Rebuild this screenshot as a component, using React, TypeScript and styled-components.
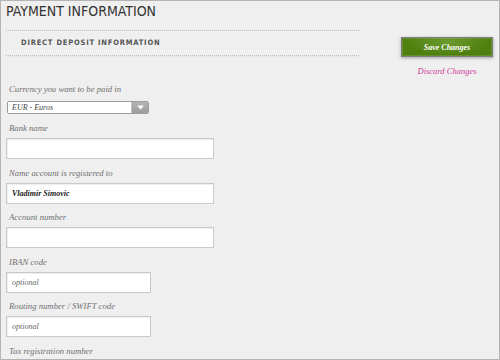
import styled, { createGlobalStyle } from 'styled-components';

const GlobalStyle = createGlobalStyle`
  html,
  body {
    margin: 0;
    padding: 0;
    background: #efefef;
  }

  * {
    box-sizing: border-box;
  }
`;

type FieldDef = {
  id: string;
  label: string;
  value?: string;
  placeholder?: string;
  short?: boolean;
};

const fields: FieldDef[] = [
  { id: 'bank-name', label: 'Bank name' },
  { id: 'account-name', label: 'Name account is registered to', value: 'Vladimir Simovic' },
  { id: 'account-number', label: 'Account number' },
  { id: 'iban', label: 'IBAN code', placeholder: 'optional', short: true },
  { id: 'swift', label: 'Routing number / SWIFT code', placeholder: 'optional', short: true },
  { id: 'tax', label: 'Tax registration number' },
];

function App() {
  return (
    <>
      <GlobalStyle />
      <Frame>
        <Title>PAYMENT INFORMATION</Title>
        <Body>
          <Main>
            <SectionHeader>DIRECT DEPOSIT INFORMATION</SectionHeader>

            <Field $select>
              <Label htmlFor='currency'>Currency you want to be paid in</Label>
              <SelectBox id='currency'>
                <span>EUR - Euros</span>
                <SelectArrow>
                  <svg width='7' height='5' viewBox='0 0 7 5'>
                    <path d='M0 0.5 L7 0.5 L3.5 4.5 Z' fill='#fff' />
                  </svg>
                </SelectArrow>
              </SelectBox>
            </Field>

            {fields.map((f) => (
              <Field key={f.id}>
                <Label htmlFor={f.id}>{f.label}</Label>
                <TextInput
                  id={f.id}
                  type='text'
                  $short={f.short}
                  defaultValue={f.value}
                  placeholder={f.placeholder}
                />
              </Field>
            ))}
          </Main>

          <Aside>
            <SaveButton>Save Changes</SaveButton>
            <DiscardLink href='#'>Discard Changes</DiscardLink>
          </Aside>
        </Body>
      </Frame>
    </>
  );
}

const Frame = styled.div`
  width: 500px;
  height: 360px;
  border: 1px solid #b4b4b4;
  background: #efefef;
  overflow: hidden;
`;

const Title = styled.h1`
  margin: 0;
  padding: 1px 5px 0;
  height: 19px;
  font-family: 'Liberation Sans Narrow', 'DejaVu Sans Condensed', 'Liberation Sans', sans-serif;
  font-weight: normal;
  font-size: 14px;
  line-height: 18px;
  color: #333;
`;

const Body = styled.div`
  display: flex;
  align-items: flex-start;
`;

const Main = styled.div`
  width: 353px;
  margin-left: 5px;
`;

const SectionHeader = styled.h2`
  margin: 10px 0 0;
  height: 26px;
  padding-left: 15px;
  border-top: 1px dotted #bcbcbc;
  border-bottom: 1px dotted #bcbcbc;
  box-shadow: 0 2px 2px -1px rgba(0, 0, 0, 0.05);
  font-family: 'Liberation Sans Narrow', 'DejaVu Sans Condensed', 'Liberation Sans', sans-serif;
  font-weight: bold;
  font-size: 7.5px;
  line-height: 24px;
  letter-spacing: 0.8px;
  color: #555;
`;

const Field = styled.div<{ $select?: boolean }>`
  display: flex;
  flex-direction: column;
  align-items: flex-start;
  gap: ${(p) => (p.$select ? '6px' : '4px')};
  margin-top: ${(p) => (p.$select ? '27px' : '0')};
  margin-bottom: ${(p) => (p.$select ? '8px' : '7.5px')};
`;

const Label = styled.label`
  display: block;
  padding-left: 3px;
  font-family: 'Liberation Serif', serif;
  font-style: italic;
  font-size: 8.7px;
  line-height: 12px;
  color: #707070;
`;

const SelectBox = styled.div`
  display: flex;
  align-items: center;
  width: 142px;
  height: 13px;
  margin-left: 1px;
  border: 1px solid #9c9c9c;
  border-radius: 2px;
  background: #fff;
  overflow: hidden;
  font-family: 'Liberation Serif', serif;
  font-style: italic;
  font-size: 8px;
  color: #444;

  > span {
    flex: 1;
    padding-left: 4px;
    line-height: 11px;
  }
`;

const SelectArrow = styled.div`
  display: flex;
  align-items: center;
  justify-content: center;
  width: 17px;
  height: 100%;
  border-left: 1px solid #c4c4c4;
  background: linear-gradient(#b3b3b3, #9d9d9d);
`;

const TextInput = styled.input<{ $short?: boolean }>`
  width: ${(p) => (p.$short ? '145px' : '208px')};
  height: 21px;
  margin: 0;
  padding: 0 5px;
  border: 1px solid #c9c9c9;
  background: #fff;
  box-shadow: inset 1px 1px 1px rgba(0, 0, 0, 0.07);
  outline: none;
  font-family: 'Liberation Serif', serif;
  font-style: italic;
  font-weight: bold;
  font-size: 8px;
  color: #222;

  &::placeholder {
    font-weight: normal;
    color: #666;
  }
`;

const Aside = styled.div`
  display: flex;
  flex-direction: column;
  align-items: center;
  width: 92px;
  margin-left: auto;
  margin-right: 6px;
  padding-top: 17px;
`;

const SaveButton = styled.button`
  width: 92px;
  height: 20px;
  padding: 0;
  border: 1px solid #7d7d7d;
  background: radial-gradient(ellipse 60% 90% at 50% 20%, #6b9b2c, #4f7f0f 80%);
  box-shadow: inset 0 0 0 1px rgba(255, 255, 255, 0.12), 0 1px 3px rgba(0, 0, 0, 0.35);
  font-family: 'Liberation Serif', serif;
  font-style: italic;
  font-weight: bold;
  font-size: 8px;
  color: #fff;
  cursor: pointer;
`;

const DiscardLink = styled.a`
  display: block;
  margin-top: 8px;
  font-family: 'Liberation Serif', serif;
  font-style: italic;
  font-size: 8.5px;
  line-height: 12px;
  color: #d2399b;
  text-decoration: none;
`;

export default App;
